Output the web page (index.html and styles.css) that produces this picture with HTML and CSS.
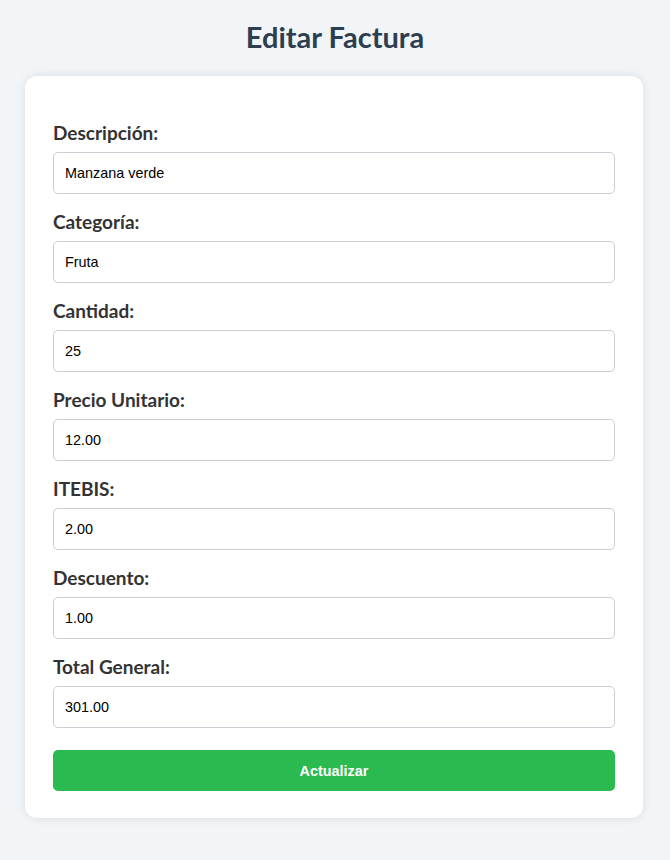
FILE: index.html
```html
<!DOCTYPE html>
<html lang="es">
<head>
<meta charset="utf-8">
<title>Editar Factura</title>
<link rel="stylesheet" href="styles.css">
</head>
<body>
<h1 class="title">Editar Factura</h1>
<form class="card">
  <div class="field">
    <label class="label">Descripción:</label>
    <input class="input" type="text" value="Manzana verde">
  </div>
  <div class="field">
    <label class="label">Categoría:</label>
    <input class="input" type="text" value="Fruta">
  </div>
  <div class="field">
    <label class="label">Cantidad:</label>
    <input class="input" type="text" value="25">
  </div>
  <div class="field">
    <label class="label">Precio Unitario:</label>
    <input class="input" type="text" value="12.00">
  </div>
  <div class="field">
    <label class="label">ITEBIS:</label>
    <input class="input" type="text" value="2.00">
  </div>
  <div class="field">
    <label class="label">Descuento:</label>
    <input class="input" type="text" value="1.00">
  </div>
  <div class="field">
    <label class="label">Total General:</label>
    <input class="input" type="text" value="301.00">
  </div>
  <button class="button" type="button">Actualizar</button>
</form>
</body>
</html>
```
FILE: styles.css
```css
html, body {
  margin: 0;
  padding: 0;
}
body {
  background: #f2f5f8;
  font-family: Lato, "Open Sans", sans-serif;
  padding: 20px 0 40px;
}
.title {
  margin: 0 0 22px;
  text-align: center;
  color: #2c3e50;
  font-size: 29px;
  font-weight: 700;
  line-height: 34px;
}
.card {
  box-sizing: border-box;
  width: 618px;
  margin: 0 0 0 25px;
  background: #fff;
  border-radius: 12px;
  box-shadow: 0 0 10px rgba(0, 0, 0, 0.1);
  padding: 47px 28px 27px;
  display: flex;
  flex-direction: column;
}
.field {
  display: flex;
  flex-direction: column;
  margin-bottom: 18px;
}
.field:last-of-type {
  margin-bottom: 22px;
}
.label {
  font-size: 19px;
  font-weight: 700;
  line-height: 20px;
  color: #333;
  margin-bottom: 9px;
}
.input {
  box-sizing: border-box;
  height: 42px;
  width: 100%;
  border: 1px solid #ccccd6;
  border-radius: 5px;
  padding: 0 11px;
  font-family: "Liberation Sans", Arial, sans-serif;
  font-size: 14.4px;
  color: #000;
  background: #fff;
}
.button {
  height: 41px;
  border: none;
  border-radius: 5px;
  background: #2bba4f;
  color: #fff;
  font-family: "Liberation Sans", Arial, sans-serif;
  font-size: 14.4px;
  font-weight: 700;
}
```
